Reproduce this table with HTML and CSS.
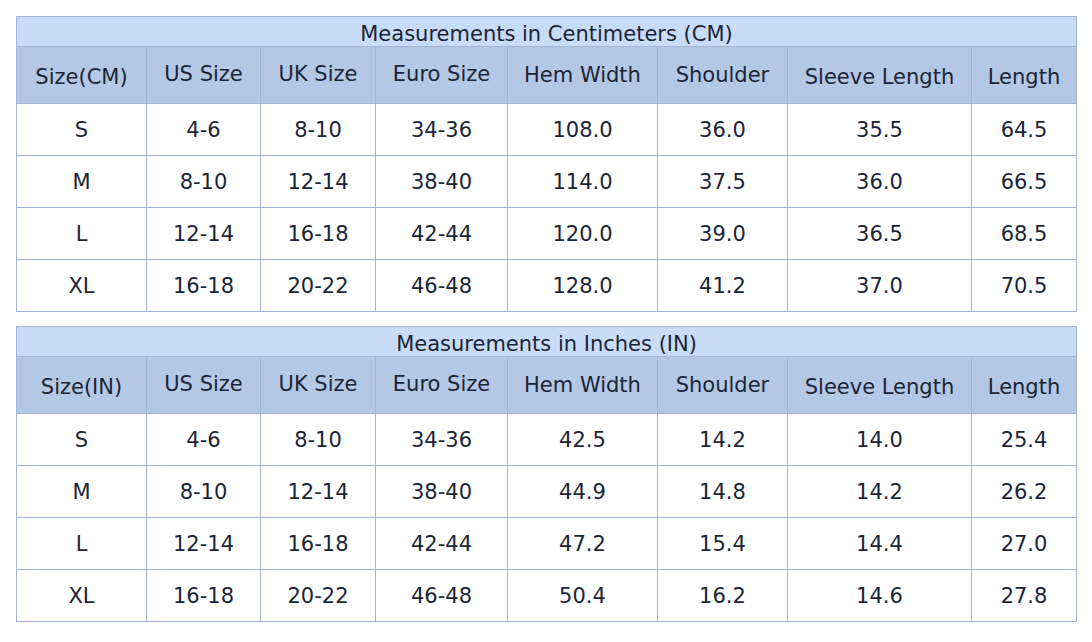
FILE: index.html
```html
<!DOCTYPE html>
<html>
<head>
<meta charset="utf-8">
<link rel="stylesheet" href="styles.css">
</head>
<body>
<div class="page">
  <table class="size-table">
    <colgroup>
      <col class="c1"><col class="c2"><col class="c3"><col class="c4"><col class="c5"><col class="c6"><col class="c7"><col class="c8">
    </colgroup>
    <tr class="title-row"><th colspan="8">Measurements in Centimeters (CM)</th></tr>
    <tr class="head-row">
      <th class="drop">Size(CM)</th><th>US Size</th><th>UK Size</th><th>Euro Size</th><th class="mid">Hem Width</th><th class="mid">Shoulder</th><th class="drop">Sleeve Length</th><th class="drop">Length</th>
    </tr>
    <tr><td>S</td><td>4-6</td><td>8-10</td><td>34-36</td><td>108.0</td><td>36.0</td><td>35.5</td><td>64.5</td></tr>
    <tr><td>M</td><td>8-10</td><td>12-14</td><td>38-40</td><td>114.0</td><td>37.5</td><td>36.0</td><td>66.5</td></tr>
    <tr><td>L</td><td>12-14</td><td>16-18</td><td>42-44</td><td>120.0</td><td>39.0</td><td>36.5</td><td>68.5</td></tr>
    <tr><td>XL</td><td>16-18</td><td>20-22</td><td>46-48</td><td>128.0</td><td>41.2</td><td>37.0</td><td>70.5</td></tr>
  </table>
  <table class="size-table">
    <colgroup>
      <col class="c1"><col class="c2"><col class="c3"><col class="c4"><col class="c5"><col class="c6"><col class="c7"><col class="c8">
    </colgroup>
    <tr class="title-row"><th colspan="8">Measurements in Inches (IN)</th></tr>
    <tr class="head-row">
      <th class="drop">Size(IN)</th><th>US Size</th><th>UK Size</th><th>Euro Size</th><th class="mid">Hem Width</th><th class="mid">Shoulder</th><th class="drop">Sleeve Length</th><th class="drop">Length</th>
    </tr>
    <tr><td>S</td><td>4-6</td><td>8-10</td><td>34-36</td><td>42.5</td><td>14.2</td><td>14.0</td><td>25.4</td></tr>
    <tr><td>M</td><td>8-10</td><td>12-14</td><td>38-40</td><td>44.9</td><td>14.8</td><td>14.2</td><td>26.2</td></tr>
    <tr><td>L</td><td>12-14</td><td>16-18</td><td>42-44</td><td>47.2</td><td>15.4</td><td>14.4</td><td>27.0</td></tr>
    <tr><td>XL</td><td>16-18</td><td>20-22</td><td>46-48</td><td>50.4</td><td>16.2</td><td>14.6</td><td>27.8</td></tr>
  </table>
</div>
</body>
</html>
```
FILE: styles.css
```css
html, body {
  margin: 0;
  padding: 0;
  background: #ffffff;
}
.page {
  padding: 16px 0 0 16px;
  display: flex;
  flex-direction: column;
  gap: 14px;
  font-family: "DejaVu Sans", Verdana, sans-serif;
  color: #1b2538;
}
.size-table {
  border-collapse: collapse;
  table-layout: fixed;
  width: 1061px;
  font-size: 21px;
}
.c1 { width: 130px; }
.c2 { width: 114px; }
.c3 { width: 115px; }
.c4 { width: 132px; }
.c5 { width: 150px; }
.c6 { width: 130px; }
.c7 { width: 184px; }
.c8 { width: 105px; }
.size-table th,
.size-table td {
  border: 1px solid #a3b5d3;
  text-align: center;
  font-weight: normal;
  padding: 0;
}
.title-row th {
  background: #c9dcf7;
  height: 30px;
  padding-top: 4px;
  line-height: 24px;
  box-sizing: border-box;
}
.head-row th {
  background: #b4c8e5;
  height: 57px;
  box-sizing: border-box;
  padding-bottom: 2px;
}
.head-row th.drop {
  padding-top: 4px;
  padding-bottom: 0;
}
.head-row th.mid {
  padding-top: 1px;
  padding-bottom: 1px;
}
.size-table td {
  height: 52px;
  box-sizing: border-box;
}
```
